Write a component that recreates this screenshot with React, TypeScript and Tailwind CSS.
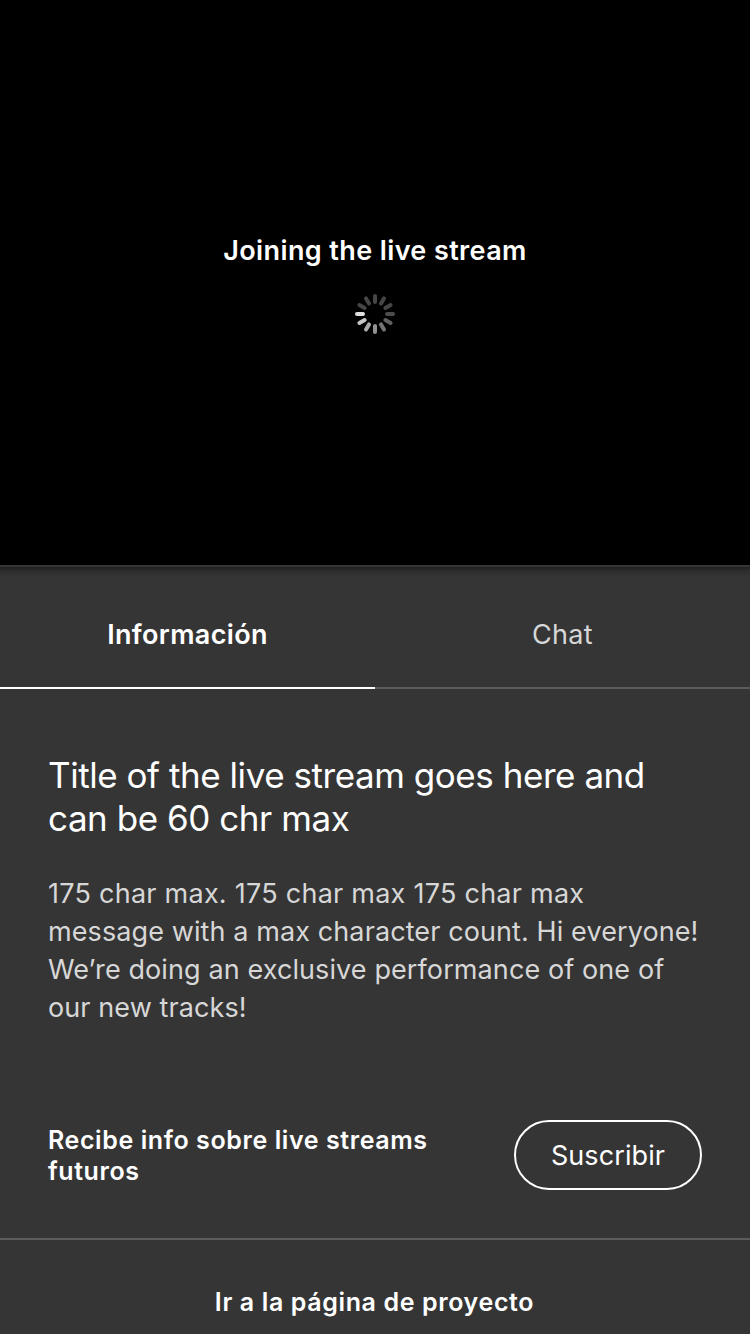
const spokes = [
  "#464646", "#464646", "#464646", "#4c4c4c", "#606060", "#757575",
  "#919191", "#aaaaaa", "#c4c4c4", "#dedede", "#464646", "#464646",
];

function Spinner() {
  return (
    <svg className="block h-10 w-10" viewBox="0 0 40 40">
      {spokes.map((color, i) => (
        <rect key={i} x="18" y="0" width="4" height="10" rx="2" fill={color} transform={`rotate(${i * 30} 20 20)`} />
      ))}
    </svg>
  );
}

export default function App() {
  return (
    <div className="flex h-[1334px] w-[750px] flex-col overflow-hidden bg-[#353535] font-['Inter','Liberation_Sans',sans-serif] text-white">
      <section className="flex h-[565px] shrink-0 flex-col items-center bg-black pt-[233px]">
        <p className="h-9 text-[27px] leading-9 font-semibold tracking-[0.39px] whitespace-nowrap">Joining the live stream</p>
        <div className="mt-[25px]"><Spinner /></div>
      </section>
      <nav className="flex h-[124px] shrink-0 border-t-2 border-[#353535] bg-[linear-gradient(to_bottom,#212121_0px,#2d2d2d_4px,#353535_10px)] text-[27px] leading-9">
        <button className="flex-1 border-b-2 border-white pt-[15px] font-semibold tracking-[0.35px]">Información</button>
        <button className="flex-1 border-b-2 border-[#5c5c5c] pt-[15px] tracking-[0.3px] text-[#d7d7d7]">Chat</button>
      </nav>
      <main className="h-[549px] shrink-0 px-12 pt-[65px]">
        <h1 className="text-[35px] leading-[43px] tracking-[-0.45px] whitespace-nowrap">Title of the live stream goes here and<br />can be 60 chr max</h1>
        <p className="mt-[35px] text-[27px] leading-[38px] tracking-[0.1px] whitespace-nowrap text-[#d7d7d7]"><span className="tracking-[0.25px]">175 char max. 175 char max 175 char max</span><br />message with a max character count. Hi everyone!<br />We’re doing an exclusive performance of one of<br />our new tracks!</p>
        <div className="mt-[93px] flex items-center justify-between">
          <p className="pt-[2px] text-[25px] leading-[31px] font-semibold tracking-[0.59px] whitespace-nowrap">Recibe info sobre live streams<br />futuros</p>
          <button className="h-[70px] w-[188px] rounded-full border-2 border-white pt-[2px] text-[27px] tracking-[0.1px]">Suscribir</button>
        </div>
      </main>
      <footer className="flex-1 border-t-2 border-[#5c5c5c] pt-[45px] pr-px text-center text-[25px] leading-[34px] font-semibold tracking-[0.62px]">Ir a la página de proyecto</footer>
    </div>
  );
}
